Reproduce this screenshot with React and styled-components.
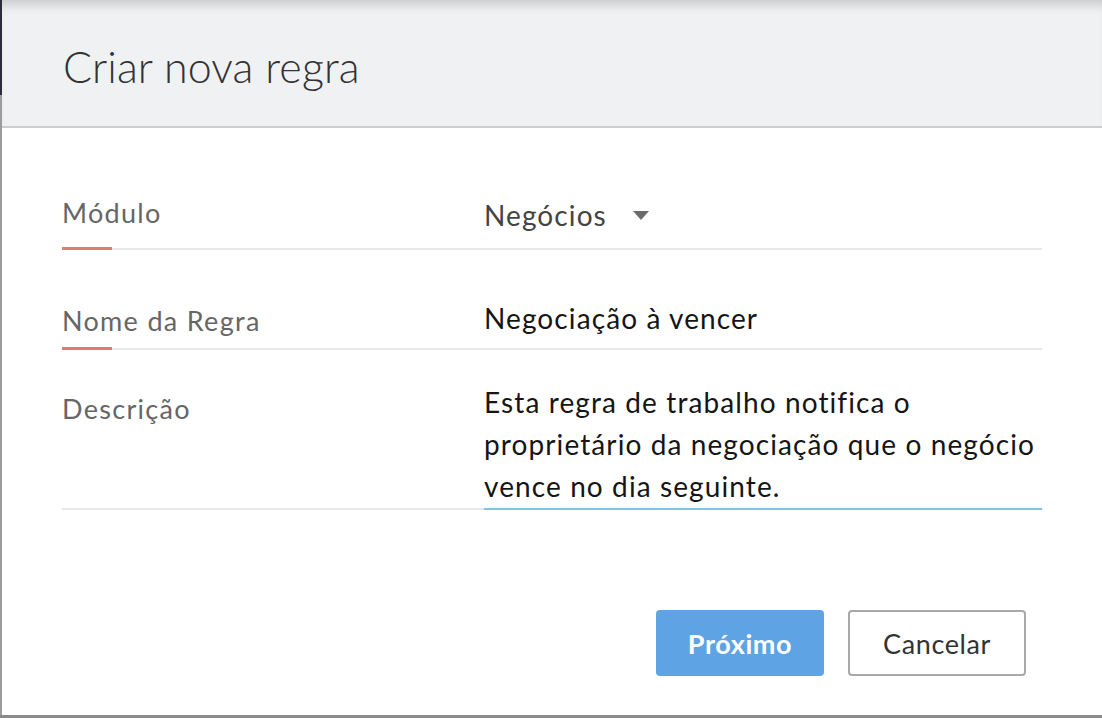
import React, { useState } from "react";
import styled, { createGlobalStyle } from "styled-components";

const GlobalStyle = createGlobalStyle`
  html, body {
    margin: 0;
    padding: 0;
  }
  body {
    font-family: Lato, "Open Sans", sans-serif;
    background: #8a8a8a;
  }
  * {
    box-sizing: border-box;
  }
`;

const Backdrop = styled.div`
  width: 1102px;
  height: 718px;
  overflow: hidden;
  padding: 0 0 3px 2px;
  background: linear-gradient(
    to bottom,
    #2b2e39 0,
    #2b2e39 95px,
    #9c9c9c 95px,
    #9c9c9c 715px,
    #8a8a8a 715px
  );
`;

const Modal = styled.div`
  height: 100%;
  background: #ffffff;
  display: flex;
  flex-direction: column;
`;

const Header = styled.div`
  height: 128px;
  flex-shrink: 0;
  background: #f0f1f3;
  border-bottom: 2px solid #cdcdcd;
  box-shadow: inset 0 12px 12px -8px rgba(0, 0, 0, 0.18);
  display: flex;
  align-items: center;
  padding: 6px 0 0 61px;
`;

const Title = styled.h1`
  margin: 0;
  font-size: 43px;
  font-weight: 300;
  color: #333333;
  letter-spacing: 0.1px;
`;

const Form = styled.div`
  padding: 22px 60px 0 60px;
  display: flex;
  flex-direction: column;
`;

const Row = styled.div`
  display: grid;
  grid-template-columns: 422px 1fr;
  height: ${(p) => p.$height}px;
`;

const Label = styled.div`
  position: relative;
  border-bottom: 2px solid #e8e8e8;
  font-size: 27px;
  letter-spacing: 1.3px;
  color: #666666;
  padding-top: ${(p) => p.$top}px;

  &::after {
    content: "";
    display: ${(p) => (p.$accent ? "block" : "none")};
    position: absolute;
    left: 0;
    bottom: -2px;
    width: 50px;
    height: 3px;
    background: #e27c73;
  }
`;

const Value = styled.div`
  border-bottom: 2px solid ${(p) => (p.$focused ? "#7ac6e8" : "#e8e8e8")};
  font-size: 28px;
  letter-spacing: 1.1px;
  color: ${(p) => p.$color || "#151515"};
  padding-top: ${(p) => p.$top}px;
  line-height: ${(p) => p.$lineHeight || "normal"};
  display: flex;
  align-items: flex-start;
`;

const Caret = styled.svg`
  margin: 13px 0 0 26px;
  flex-shrink: 0;
`;

const Actions = styled.div`
  margin-top: 100px;
  display: flex;
  justify-content: flex-end;
  gap: 24px;
  padding-right: 76px;
`;

const Button = styled.button`
  height: 66px;
  width: ${(p) => p.$width}px;
  border-radius: 4px;
  font-family: Lato, "Open Sans", sans-serif;
  font-size: 27px;
  letter-spacing: 0.6px;
  cursor: pointer;
  background: ${(p) => (p.$primary ? "#5ea3e4" : "#ffffff")};
  color: ${(p) => (p.$primary ? "#ffffff" : "#333333")};
  font-weight: ${(p) => (p.$primary ? 700 : 400)};
  border: ${(p) => (p.$primary ? "none" : "2px solid #a9a9a9")};
`;

export default function App() {
  const [module] = useState("Negócios");

  return (
    <>
      <GlobalStyle />
      <Backdrop>
        <Modal>
          <Header>
            <Title>Criar nova regra</Title>
          </Header>
          <Form>
            <Row $height={100}>
              <Label $accent $top={46}>Módulo</Label>
              <Value $top={48} $color="#444444">
                {module}
                <Caret width="16" height="9" viewBox="0 0 16 9">
                  <path d="M0 0 H16 L8 9 Z" fill="#6b6b6b" />
                </Caret>
              </Value>
            </Row>
            <Row $height={100}>
              <Label $accent $top={54}>Nome da Regra</Label>
              <Value $top={51}>Negociação à vencer</Value>
            </Row>
            <Row $height={160}>
              <Label $top={42}>Descrição</Label>
              <Value $focused $top={31} $lineHeight="42px">
                Esta regra de trabalho notifica o proprietário da negociação
                que o negócio vence no dia seguinte.
              </Value>
            </Row>
          </Form>
          <Actions>
            <Button $primary $width={168}>Próximo</Button>
            <Button $width={178}>Cancelar</Button>
          </Actions>
        </Modal>
      </Backdrop>
    </>
  );
}
